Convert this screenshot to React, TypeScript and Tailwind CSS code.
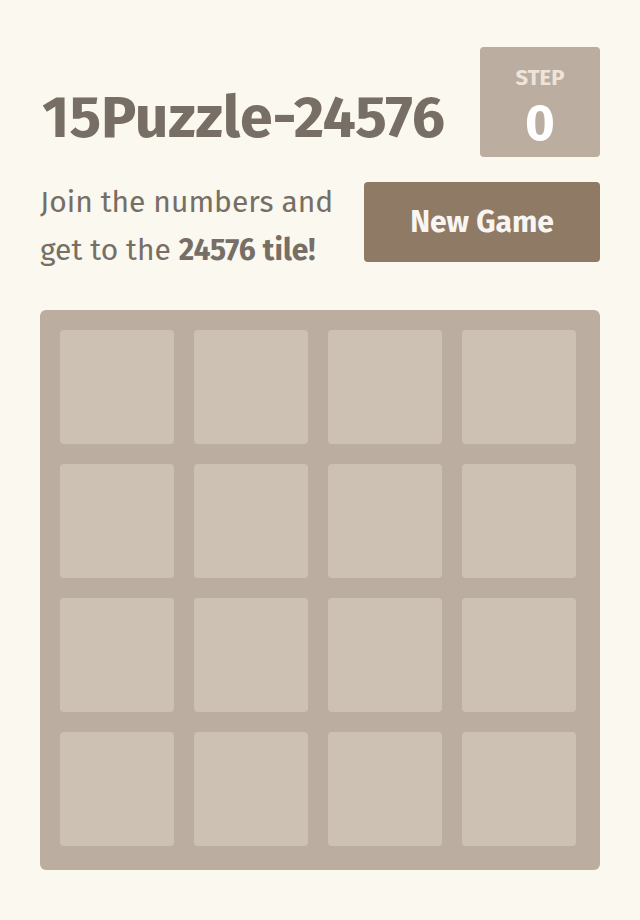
export default function App() {
  const cells = Array.from({ length: 16 }, (_, i) => i);
  return (
    <div className="min-h-[920px] bg-[#faf8ef] text-[#776e65]" style={{ fontFamily: '"Fira Sans", "Noto Sans", sans-serif' }}>
      <div className="mx-auto w-[560px] pt-[47px]">
        <div className="flex h-[110px] items-start justify-between">
          <h1 className="mt-[39px] ml-[2px] text-[59px] font-bold leading-[64px]">15Puzzle-24576</h1>
          <div className="flex h-[110px] w-[120px] flex-col items-center rounded-[4px] bg-[#bbada0] pt-[18px]">
            <div className="text-[22px] font-bold uppercase leading-[26px] text-[#eee4da]">Step</div>
            <div className="mt-[4px] text-[51px] font-bold leading-[56px] text-white">0</div>
          </div>
        </div>
        <div className="mt-[21px] flex items-start justify-between">
          <p className="text-[30px] leading-[48px]">
            Join the numbers and
            <br />
            get to the <strong className="font-bold">24576 tile!</strong>
          </p>
          <button className="mt-[4px] h-[80px] w-[236px] rounded-[4px] bg-[#8f7a66] text-[30px] font-bold text-[#f9f6f2]">
            New Game
          </button>
        </div>
        <div className="mt-[36px] grid h-[560px] grid-cols-4 gap-5 rounded-[6px] bg-[#bbada0] pt-5 pl-5 pr-6 pb-6">
          {cells.map((c) => (
            <div key={c} className="h-[114px] rounded-[4px] bg-[#cdc1b4]" />
          ))}
        </div>
      </div>
    </div>
  );
}
